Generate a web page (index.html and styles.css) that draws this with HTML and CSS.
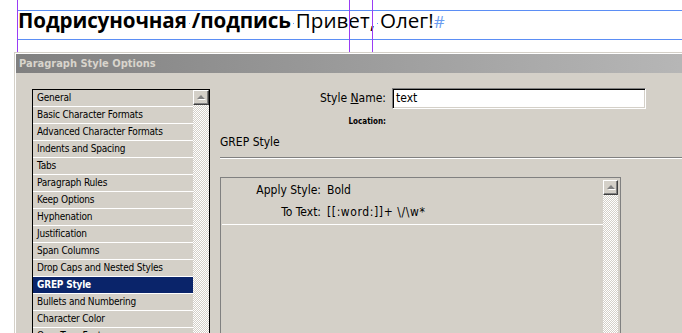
FILE: index.html
```html
<!DOCTYPE html>
<html>
<head>
<meta charset="utf-8">
<title>Paragraph Style Options</title>
<link rel="stylesheet" href="styles.css">
</head>
<body>
<div class="page">
  <div class="guide gh g1"></div>
  <div class="guide gh g2"></div>
  <div class="guide gv v1"></div>
  <div class="guide gv v2"></div>
  <div class="guide gv v3"></div>
  <p class="line"><b>Подрисуночная<span class="sp"> </span>/подпись</b><span class="sp"> </span>Привет,<span class="sp"> </span>Олег!<span class="hash">#</span></p>
</div>
<div class="dialog">
  <div class="frame">
    <div class="title">Paragraph Style Options</div>
    <div class="body">
      <div class="list">
        <ul class="items">
          <li>General</li>
          <li>Basic Character Formats</li>
          <li>Advanced Character Formats</li>
          <li>Indents and Spacing</li>
          <li>Tabs</li>
          <li>Paragraph Rules</li>
          <li>Keep Options</li>
          <li>Hyphenation</li>
          <li>Justification</li>
          <li>Span Columns</li>
          <li>Drop Caps and Nested Styles</li>
          <li class="sel">GREP Style</li>
          <li>Bullets and Numbering</li>
          <li>Character Color</li>
          <li>OpenType Features</li>
        </ul>
        <div class="vscroll"><div class="sbtn"><span class="arr"></span></div></div>
      </div>
      <div class="pane">
        <div class="namerow">
          <label class="lbl">Style <u>N</u>ame:</label>
          <div class="input">text</div>
        </div>
        <div class="locrow"><span class="loc">Location:</span></div>
        <h2 class="heading">GREP Style</h2>
        <div class="rule"></div>
        <div class="grepbox">
          <div class="greplist">
            <div class="gitem">
              <div class="kv"><span class="k">Apply Style:</span><span class="v">Bold</span></div>
              <div class="kv kv2"><span class="k">To Text:</span><span class="v rx">[[:word:]]+ \/\w*</span></div>
            </div>
          </div>
          <div class="vscroll gscroll"><div class="sbtn"><span class="arr"></span></div></div>
        </div>
      </div>
    </div>
  </div>
</div>
</body>
</html>
```

FILE: styles.css
```css
html, body {
  margin: 0;
  padding: 0;
  background: #fff;
  width: 682px;
  height: 333px;
  overflow: hidden;
}

.page {
  position: relative;
  height: 52px;
}

.guide { position: absolute; }
.gh { left: 17px; right: 0; height: 1px; background: #5b8ef5; }
.g1 { top: 10px; }
.g2 { top: 39px; }
.gv { top: 0; height: 52px; width: 1px; background: #9a3cf5; }
.v1 { left: 17px; }
.v2 { left: 349px; }
.v3 { left: 372px; }

.line {
  margin: 0;
  padding: 6px 0 0 18px;
  font-family: "Open Sans", sans-serif;
  font-size: 20.6px;
  line-height: 28px;
  color: #000;
  white-space: nowrap;
}
.line b { font-weight: 700; letter-spacing: -0.1px; }
.sp {
  position: relative;
  display: inline-block;
  width: 5px;
}
.sp::after {
  content: "";
  position: absolute;
  left: 2px;
  top: -5px;
  width: 1px;
  height: 1px;
  background: #6a9cf0;
}
.hash {
  color: #6a9cf0;
  font-weight: 400;
  font-size: 17px;
}

.dialog {
  margin-left: 14px;
  width: 700px;
  border-top: 1px solid #d4d0c8;
  border-left: 1px solid #d4d0c8;
}
.frame {
  border-top: 1px solid #fff;
  border-left: 1px solid #fff;
}
.title {
  height: 19px;
  padding-left: 3px;
  background: linear-gradient(to right, #808080, #b6b6b6 95%);
  color: #d8d4cc;
  font-family: "DejaVu Sans", sans-serif;
  font-stretch: condensed;
  font-weight: 700;
  font-size: 11px;
  line-height: 19px;
}
.body {
  display: flex;
  align-items: flex-start;
  background: #d4d0c8;
  height: 244px;
  overflow: hidden;
  padding: 16px 0 0 16px;
  font-family: "DejaVu Sans", sans-serif;
  font-stretch: condensed;
  color: #000;
}

.list {
  display: flex;
  border: 1px solid #000;
  width: 176px;
}
.items {
  list-style: none;
  margin: 0;
  padding: 0;
  width: 160px;
  font-size: 10px;
  letter-spacing: -0.2px;
}
.items li {
  height: 16px;
  line-height: 16px;
  padding-left: 4px;
  border-bottom: 1px solid #fff;
  white-space: nowrap;
  overflow: hidden;
}
.items li.sel {
  background: #0a246a;
  color: #fff;
  font-weight: 700;
}

.vscroll {
  width: 16px;
  align-self: stretch;
  background: repeating-conic-gradient(#fff 0 25%, #d4d0c8 0 50%) 0 0 / 2px 2px;
}
.sbtn {
  box-sizing: border-box;
  width: 16px;
  height: 15px;
  background: #d4d0c8;
  border-top: 1px solid #fff;
  border-left: 1px solid #fff;
  border-right: 1px solid #404040;
  border-bottom: 1px solid #404040;
  box-shadow: inset -1px -1px #808080;
  display: flex;
  align-items: center;
  justify-content: center;
}
.arr {
  width: 0;
  height: 0;
  border-left: 4px solid transparent;
  border-right: 4px solid transparent;
  border-bottom: 4px solid #808080;
  filter: drop-shadow(1px 1px 0 #fff);
  margin-top: -1px;
}

.pane {
  flex: 1;
  margin-left: 10px;
  margin-top: -1px;
  font-size: 12px;
}
.namerow {
  display: grid;
  grid-template-columns: 166px 254px;
  column-gap: 6px;
  align-items: center;
}
.lbl {
  text-align: right;
  line-height: 21px;
}
.input {
  box-sizing: border-box;
  height: 21px;
  background: #fff;
  border-top: 1px solid #808080;
  border-left: 1px solid #808080;
  border-right: 1px solid #fff;
  border-bottom: 1px solid #fff;
  box-shadow: inset 1px 1px #000, inset -1px -1px #d4d0c8;
  padding-left: 3px;
  line-height: 19px;
}
.locrow {
  display: grid;
  grid-template-columns: 166px;
  margin-top: 7px;
}
.loc {
  text-align: right;
  font-size: 8px;
  font-weight: 700;
  line-height: 12px;
}
.heading {
  margin: 6px 0 0;
  font-size: 12px;
  font-weight: 400;
  line-height: 16px;
}
.rule {
  margin-top: 7px;
  height: 1px;
  background: #808080;
  border-bottom: 1px solid #fff;
}
.grepbox {
  margin-top: 18px;
  width: 397px;
  height: 200px;
  border: 1px solid #808080;
  padding: 2px 1px 0 1px;
  display: flex;
}
.greplist {
  flex: 1;
}
.gitem {
  border-bottom: 1px solid #fff;
  padding-bottom: 2px;
}
.kv {
  display: grid;
  grid-template-columns: 99px 1fr;
  column-gap: 6px;
  line-height: 20px;
}
.kv2 { margin-top: 2px; }
.k { text-align: right; }
.rx { letter-spacing: 0.6px; }
.gscroll { width: 15px; margin-right: 1px; }
.gscroll .sbtn { width: 15px; }
```
